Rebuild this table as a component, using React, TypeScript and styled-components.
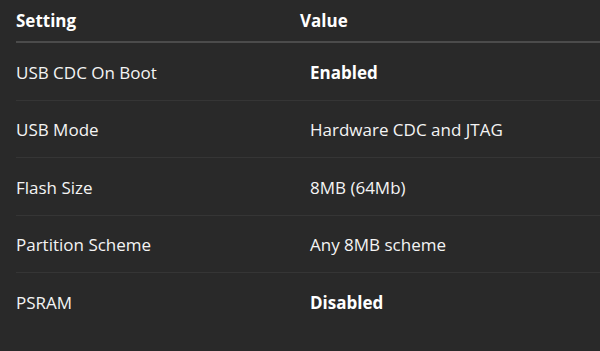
import { Fragment } from "react";
import styled, { createGlobalStyle } from "styled-components";

const GlobalStyle = createGlobalStyle`
  html, body {
    margin: 0;
    padding: 0;
    background: #292929;
  }
  body {
    font-family: "Open Sans", "Noto Sans", sans-serif;
    color: #f4f4f4;
  }
`;

const rows: { setting: string; value: string; strong?: boolean }[] = [
  { setting: "USB CDC On Boot", value: "Enabled", strong: true },
  { setting: "USB Mode", value: "Hardware CDC and JTAG" },
  { setting: "Flash Size", value: "8MB (64Mb)" },
  { setting: "Partition Scheme", value: "Any 8MB scheme" },
  { setting: "PSRAM", value: "Disabled", strong: true },
];

const Page = styled.div`
  width: 600px;
  height: 351px;
  overflow: hidden;
  background: #292929;
  padding-left: 16px;
  box-sizing: border-box;
`;

const Table = styled.div`
  display: grid;
  grid-template-columns: 284px 1fr;
`;

const HeadCell = styled.div`
  height: 43px;
  display: flex;
  align-items: center;
  font-size: 17px;
  font-weight: 700;
  color: #ffffff;
  border-bottom: 2px solid #4b4b4b;
  box-sizing: border-box;
  padding-bottom: 1px;
`;

const Cell = styled.div<{ $value?: boolean; $strong?: boolean; $last?: boolean }>`
  height: 57.5px;
  display: flex;
  align-items: center;
  padding-left: ${(p) => (p.$value ? "10px" : "0")};
  padding-top: 2px;
  font-size: 17px;
  font-weight: ${(p) => (p.$strong ? 700 : 400)};
  color: ${(p) => (p.$strong ? "#ffffff" : "#f4f4f4")};
  border-bottom: 1px solid ${(p) => (p.$last ? "transparent" : "#353535")};
  box-sizing: border-box;
`;

export default function App() {
  return (
    <>
      <GlobalStyle />
      <Page>
        <Table>
          <HeadCell>Setting</HeadCell>
          <HeadCell>Value</HeadCell>
          {rows.map((r, i) => (
            <Fragment key={r.setting}>
              <Cell $last={i === rows.length - 1}>{r.setting}</Cell>
              <Cell $value $strong={r.strong} $last={i === rows.length - 1}>
                {r.value}
              </Cell>
            </Fragment>
          ))}
        </Table>
      </Page>
    </>
  );
}
